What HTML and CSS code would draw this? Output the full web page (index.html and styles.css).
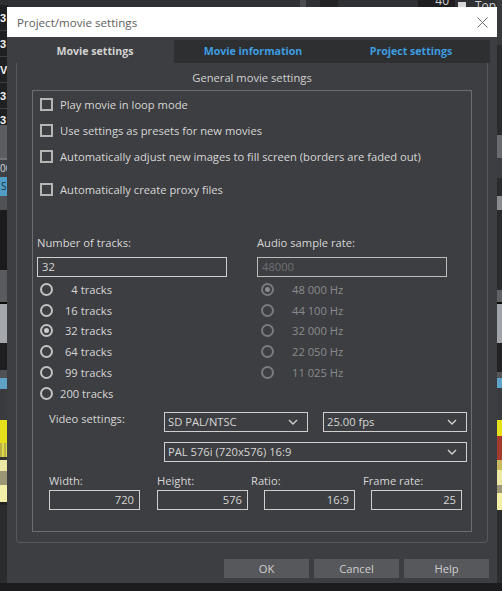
FILE: index.html
```html
<!DOCTYPE html>
<html>
<head>
<meta charset="utf-8">
<link rel="stylesheet" href="styles.css">
</head>
<body>
<div class="screen">
  <div class="strip strip-left">
    <div class="s s-top"></div>
    <div class="s s-row">3</div>
    <div class="s s-row">3</div>
    <div class="s s-row">V</div>
    <div class="s s-row">3</div>
    <div class="s s-row s-row-last">3</div>
    <div class="s s-gray"></div>
    <div class="s s-dk">00</div>
    <div class="s s-blue">S</div>
    <div class="s s-mid"></div>
    <div class="s s-black"></div>
    <div class="s s-gray2"></div>
    <div class="s s-line"></div>
    <div class="s s-light"></div>
    <div class="s s-black2"></div>
    <div class="s s-mid2"></div>
    <div class="s s-blue2"></div>
    <div class="s s-dk2"></div>
    <div class="s s-yellow"></div>
    <div class="s s-yimg"></div>
    <div class="s s-sep"></div>
    <div class="s s-pale"></div>
    <div class="s s-olive"></div>
    <div class="s s-pale2"></div>
    <div class="s s-rest"></div>
    <div class="s s-bottom"></div>
  </div>
  <div class="strip-mid">
    <div class="topbar">
      <span class="tb-block tb-a"></span>
      <span class="tb-block tb-b"></span>
      <span class="tb-num">40</span>
      <span class="tb-drop"></span>
      <span class="tb-text">Top</span>
    </div>
    <div class="mid-fill"></div>
    <div class="mid-bottom"></div>
  </div>
  <div class="strip strip-right">
    <div class="r r-top"></div>
    <div class="r r-dark"></div>
    <div class="r r-gray"></div>
    <div class="r r-dk"></div>
    <div class="r r-dark2"></div>
    <div class="r r-lt"></div>
    <div class="r r-dark3"></div>
    <div class="r r-gray2"></div>
    <div class="r r-line"></div>
    <div class="r r-light"></div>
    <div class="r r-black"></div>
    <div class="r r-mid"></div>
    <div class="r r-blue"></div>
    <div class="r r-dk2"></div>
    <div class="r r-yellow"></div>
    <div class="r r-red"></div>
    <div class="r r-ochre"></div>
    <div class="r r-pale"></div>
    <div class="r r-olive"></div>
    <div class="r r-pale2"></div>
    <div class="r r-rest"></div>
    <div class="r r-bottom"></div>
  </div>

  <div class="dialog">
    <div class="titlebar">
      <span class="title">Project/movie settings</span>
      <svg class="close" width="11" height="11" viewBox="0 0 11 11"><path d="M0.5 0.5 L10.5 10.5 M10.5 0.5 L0.5 10.5" stroke="#6e6e6e" stroke-width="1" fill="none"/></svg>
    </div>
    <div class="tabs">
      <div class="tab tab-active">Movie settings</div>
      <div class="tab tab-inactive">Movie information</div>
      <div class="tab tab-inactive">Project settings</div>
    </div>
    <div class="panel">
      <div class="panel-heading">General movie settings</div>
      <div class="group">
        <div class="check-row"><span class="checkbox"></span><span>Play movie in loop mode</span></div>
        <div class="check-row"><span class="checkbox"></span><span>Use settings as presets for new movies</span></div>
        <div class="check-row"><span class="checkbox"></span><span>Automatically adjust new images to fill screen (borders are faded out)</span></div>
        <div class="check-row check-row-gap"><span class="checkbox"></span><span>Automatically create proxy files</span></div>

        <div class="cols">
          <div class="col col-left">
            <div class="field-label">Number of tracks:</div>
            <div class="textbox">32</div>
            <div class="radios">
              <div class="radio-row"><span class="radio"></span><span class="radio-text rt-right">4 tracks</span></div>
              <div class="radio-row"><span class="radio"></span><span class="radio-text rt-right">16 tracks</span></div>
              <div class="radio-row"><span class="radio radio-on"></span><span class="radio-text rt-right">32 tracks</span></div>
              <div class="radio-row"><span class="radio"></span><span class="radio-text rt-right">64 tracks</span></div>
              <div class="radio-row"><span class="radio"></span><span class="radio-text rt-right">99 tracks</span></div>
              <div class="radio-row"><span class="radio"></span><span class="radio-text rt-right">200 tracks</span></div>
            </div>
          </div>
          <div class="col col-right">
            <div class="field-label">Audio sample rate:</div>
            <div class="textbox textbox-disabled">48000</div>
            <div class="radios radios-disabled">
              <div class="radio-row"><span class="radio radio-on"></span><span class="radio-text">48 000 Hz</span></div>
              <div class="radio-row"><span class="radio"></span><span class="radio-text">44 100 Hz</span></div>
              <div class="radio-row"><span class="radio"></span><span class="radio-text">32 000 Hz</span></div>
              <div class="radio-row"><span class="radio"></span><span class="radio-text">22 050 Hz</span></div>
              <div class="radio-row"><span class="radio"></span><span class="radio-text">11 025 Hz</span></div>
            </div>
          </div>
        </div>

        <div class="video">
          <div class="video-label">Video settings:</div>
          <div class="video-selects">
            <div class="select-row">
              <div class="select select-half"><span>SD PAL/NTSC</span><svg class="chev" width="10" height="6" viewBox="0 0 10 6"><path d="M1 1 L5 5 L9 1" stroke="#d0d0d0" stroke-width="1.4" fill="none"/></svg></div>
              <div class="select select-half"><span>25.00 fps</span><svg class="chev" width="10" height="6" viewBox="0 0 10 6"><path d="M1 1 L5 5 L9 1" stroke="#d0d0d0" stroke-width="1.4" fill="none"/></svg></div>
            </div>
            <div class="select select-full"><span>PAL 576i (720x576) 16:9</span><svg class="chev" width="10" height="6" viewBox="0 0 10 6"><path d="M1 1 L5 5 L9 1" stroke="#d0d0d0" stroke-width="1.4" fill="none"/></svg></div>
          </div>
        </div>

        <div class="dims">
          <div class="dim dim-w"><div class="dim-label">Width:</div><div class="dim-box">720</div></div>
          <div class="dim dim-h"><div class="dim-label">Height:</div><div class="dim-box">576</div></div>
          <div class="dim dim-r"><div class="dim-label">Ratio:</div><div class="dim-box dim-box-r">16:9</div></div>
          <div class="dim dim-f"><div class="dim-label">Frame rate:</div><div class="dim-box dim-box-f">25</div></div>
        </div>
      </div>
    </div>
    <div class="buttons">
      <div class="btn">OK</div>
      <div class="btn">Cancel</div>
      <div class="btn">Help</div>
    </div>
  </div>
</div>
</body>
</html>
```

FILE: styles.css
```css
* { box-sizing: border-box; }
html, body { margin: 0; padding: 0; }
body {
  width: 502px;
  height: 591px;
  overflow: hidden;
  background: #2b2c2e;
  font-family: "Open Sans", "Noto Sans", sans-serif;
}
.screen {
  position: relative;
  width: 502px;
  height: 591px;
  display: grid;
  grid-template-columns: 8px 1fr 5px;
}

/* background app strips */
.strip { display: flex; flex-direction: column; overflow: hidden; }
.s, .r { flex: none; width: 100%; overflow: hidden; white-space: nowrap; }
.s-top { height: 5px; background: #2e2f31; }
.s-row {
  height: 26px; background: #1f2022; border-bottom: 1px solid #3e3f42;
  color: #f2f2f2; font-family: "Liberation Sans", sans-serif; font-weight: bold; font-size: 11px;
  line-height: 26px; padding-left: 0;
}
.s-row-last { height: 16px; line-height: 22px; border-bottom: none; }
.s-gray { height: 35px; background: #5c5d60; border-bottom: 2px solid #727376; }
.s-dk { height: 17px; background: #404144; color: #d8d8d8; font-size: 10px; line-height: 17px; }
.s-blue { height: 19px; background: #4f9cc4; color: #1d3444; font-size: 10px; line-height: 19px; padding-left: 1px; }
.s-mid { height: 14px; background: #505154; }
.s-black { height: 60px; background: #1b1b1d; }
.s-gray2 { height: 32px; background: #5a5b5e; }
.s-line { height: 2px; background: #0a0a0a; }
.s-light { height: 39px; background: #a4a7ab; }
.s-black2 { height: 27px; background: #1e1e20; }
.s-mid2 { height: 8px; background: #505154; }
.s-blue2 { height: 11px; background: #5ea2c8; }
.s-dk2 { height: 31px; background: #3a3b3f; }
.s-yellow { height: 23px; background: #e6df1c; }
.s-yimg { height: 14px; background: repeating-linear-gradient(90deg, #b8b040 0 2px, #e0d850 2px 4px); }
.s-sep { height: 3px; background: #333; }
.s-pale { height: 11px; background: #ede8a6; }
.s-olive { height: 14px; background: #9a9676; }
.s-pale2 { height: 17px; background: #f4efa8; }
.s-rest { flex: 1; background: #2b2c2e; border-top: 3px solid #222; }
.s-bottom { height: 8px; background: #1c1c1e; }

.strip-mid { display: flex; flex-direction: column; }
.topbar {
  height: 7px; background: #2f3033; display: flex; align-items: flex-end; overflow: hidden;
  font-size: 12px; color: #d0d0d0; white-space: nowrap;
}
.tb-block { height: 7px; display: block; }
.tb-a { margin-left: 292px; width: 6px; background: #4a4b4e; }
.tb-b { margin-left: 14px; width: 18px; background: #232325; }
.tb-num { margin-left: 80px; width: 37px; height: 7px; background: #1e1e20; line-height: 2px; text-align: right; padding-right: 6px; }
.tb-drop { margin-left: 3px; width: 8px; height: 5px; background: #d8d8d8; }
.tb-text { margin-left: 9px; line-height: 2px; color: #cfcfcf; }
.mid-fill { flex: 1; }
.mid-bottom { height: 8px; background: #1c1c1e; }

.r-top { height: 45px; background: #38393b; }
.r-dark { height: 90px; background: #2a2b2d; }
.r-gray { height: 23px; background: #6a6b6e; }
.r-dk { height: 20px; background: #3c3d40; }
.r-dark2 { height: 18px; background: #2a2b2d; }
.r-lt { height: 14px; background: #8a8b8e; }
.r-dark3 { height: 80px; background: #2a2b2d; }
.r-gray2 { height: 12px; background: #606164; }
.r-line { height: 2px; background: #0a0a0a; }
.r-light { height: 39px; background: #a0a3a7; }
.r-black { height: 29px; background: #222224; }
.r-mid { height: 6px; background: #555; }
.r-blue { height: 10px; background: #5ea2c8; }
.r-dk2 { height: 32px; background: #3a3b3e; }
.r-yellow { height: 16px; background: #e6df1c; }
.r-red { height: 24px; background: #a23a30; }
.r-ochre { height: 10px; background: #c8b860; }
.r-pale { height: 15px; background: #ede8a6; }
.r-olive { height: 8px; background: #9a9676; }
.r-pale2 { height: 17px; background: #f4efa8; }
.r-rest { flex: 1; background: #2b2c2e; }
.r-bottom { height: 8px; background: #1c1c1e; }

/* dialog */
.dialog {
  position: absolute;
  left: 7px;
  top: 7px;
  width: 490px;
  height: 576px;
  background: #3d3e41;
  display: flex;
  flex-direction: column;
  color: #d6d6d6;
  font-size: 11.2px;
}
.titlebar {
  height: 30px;
  background: #ffffff;
  display: flex;
  align-items: center;
  justify-content: space-between;
  padding: 0 9px 0 10px;
}
.title { font-size: 11.6px; color: #5e5e5e; }
.close { display: block; }

.tabs {
  margin-top: 3px;
  margin-left: 9px;
  width: 474px;
  height: 23px;
  display: flex;
}
.tab {
  flex: 1;
  text-align: center;
  font-weight: bold;
  font-size: 10.6px;
  line-height: 23px;
}
.tab-active { color: #d2d2d2; }
.tab-inactive { background: #2e2f31; color: #3d9de0; }

.panel {
  margin-left: 9px;
  width: 472px;
  height: 480px;
  border: 1px solid #57585c;
  border-top: none;
  border-radius: 0 0 4px 4px;
  padding: 0 15px 10px 15px;
  display: flex;
  flex-direction: column;
}
.panel-heading {
  height: 27px;
  padding-top: 7px;
  line-height: 16px;
  text-align: center;
  color: #d2d2d2;
}
.group {
  flex: 1;
  border: 1px solid #6c6d70;
  padding: 0 0 0 4px;
  display: flex;
  flex-direction: column;
}
.check-row {
  height: 26px;
  display: flex;
  align-items: center;
  gap: 7px;
  padding-left: 3px;
  white-space: nowrap;
}
.check-row-gap { margin-top: 7px; }
.checkbox {
  width: 13px;
  height: 13px;
  border: 2px solid #b6b6b6;
  flex: none;
}

.cols {
  margin-top: 33px;
  display: flex;
  gap: 30px;
}
.col { width: 190px; display: flex; flex-direction: column; }
.field-label { height: 16px; line-height: 16px; }
.textbox {
  margin-top: 6px;
  height: 20px;
  border: 1px solid #cfcfcf;
  line-height: 18px;
  padding-left: 4px;
}
.textbox-disabled { color: #6e6f72; border-color: #bdbdbd; }
.radios { margin-top: 2px; display: flex; flex-direction: column; }
.radio-row { height: 20.8px; display: flex; align-items: center; padding-left: 3px; white-space: nowrap; }
.col-right .radio-row { padding-left: 4px; }
.radio {
  width: 13px;
  height: 13px;
  border-radius: 50%;
  border: 2px solid #c2c2c2;
  flex: none;
  display: flex;
  align-items: center;
  justify-content: center;
}
.radio-on::after {
  content: "";
  width: 5px;
  height: 5px;
  border-radius: 50%;
  background: #cccccc;
}
.radio-text { margin-left: 7px; }
.rt-right { width: 52px; text-align: right; }
.radios-disabled { color: #8a8b8e; }
.radios-disabled .radio { border-color: #7a7b7e; }
.radios-disabled .radio-on::after { background: #8a8b8e; }
.col-right .radio-text { margin-left: 18px; }

.video {
  margin-top: 8px;
  display: flex;
  padding-left: 12px;
}
.video-label { width: 115px; height: 20px; line-height: 14px; }
.video-selects { display: flex; flex-direction: column; gap: 10px; }
.select-row { display: flex; gap: 15px; }
.select {
  height: 20px;
  border: 1px solid #cfcfcf;
  display: flex;
  align-items: center;
  justify-content: space-between;
  padding: 0 9px 0 3px;
  white-space: nowrap;
}
.select-half { width: 144px; }
.select-full { width: 303px; }
.chev { display: block; }

.dims {
  margin-top: 11px;
  display: flex;
  padding-left: 12px;
}
.dim { display: flex; flex-direction: column; white-space: nowrap; }
.dim-label { height: 17px; line-height: 16px; }
.dim-box {
  height: 20px;
  width: 91px;
  border: 1px solid #cfcfcf;
  text-align: right;
  padding-right: 5px;
  line-height: 18px;
}
.dim-w { width: 108px; }
.dim-h { width: 94px; }
.dim-r { width: 112px; }
.dim-box-r { margin-left: 13px; }
.dim-box-f { margin-left: 8px; }

.buttons {
  margin-top: 16px;
  display: flex;
  justify-content: flex-end;
  gap: 5px;
  padding-right: 8px;
}
.btn {
  width: 85px;
  height: 19px;
  background: #57585b;
  color: #cfcfcf;
  text-align: center;
  line-height: 19px;
}
```
